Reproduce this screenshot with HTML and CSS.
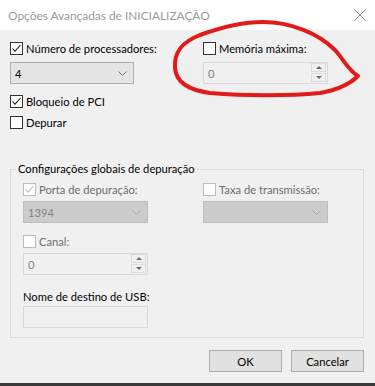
FILE: index.html
```html
<!DOCTYPE html>
<html lang="pt">
<head>
    <meta charset="UTF-8">
    <title>Opções Avançadas de INICIALIZAÇÃO</title>
    <link rel="stylesheet" href="styles.css">
</head>
<body>
    <div class="window">
        <div class="titlebar">
            <span class="title">Opções Avançadas de INICIALIZAÇÃO</span>
            <svg class="close" width="12" height="12" viewBox="0 0 12 12">
                <path d="M0.5 0.5 L11.5 11.5 M11.5 0.5 L0.5 11.5" stroke="#8a8a8a" stroke-width="1" fill="none"/>
            </svg>
        </div>

        <div class="dialog">
            <div class="cols">
                <div class="col">
                    <label class="check">
                        <span class="box"><svg viewBox="0 0 13 13"><path d="M2.5 6.5 L5 9.2 L10.5 3" stroke="#222" stroke-width="1.1" fill="none"/></svg></span>
                        Número de processadores:
                    </label>
                    <div class="combo">
                        <span>4</span>
                        <svg width="9" height="5" viewBox="0 0 9 5"><path d="M0.5 0.5 L4.5 4.5 L8.5 0.5" stroke="#707070" fill="none"/></svg>
                    </div>
                    <label class="check row-pci">
                        <span class="box"><svg viewBox="0 0 13 13"><path d="M2.5 6.5 L5 9.2 L10.5 3" stroke="#222" stroke-width="1.1" fill="none"/></svg></span>
                        Bloqueio de PCI
                    </label>
                    <label class="check row-dep">
                        <span class="box"></span>
                        Depurar
                    </label>
                </div>
                <div class="col">
                    <label class="check">
                        <span class="box"></span>
                        Memória máxima:
                    </label>
                    <div class="spin">
                        <span class="value">0</span>
                        <span class="spin-btns">
                            <span class="arrow up"></span>
                            <span class="arrow down"></span>
                        </span>
                    </div>
                </div>
            </div>

            <fieldset class="group">
                <legend>Configurações globais de depuração</legend>
                <div class="cols">
                    <div class="col">
                        <label class="check disabled">
                            <span class="box"><svg viewBox="0 0 13 13"><path d="M2.5 6.5 L5 9.2 L10.5 3" stroke="#bcbcbc" stroke-width="1.1" fill="none"/></svg></span>
                            Porta de depuração:
                        </label>
                        <div class="combo off">
                            <span>1394</span>
                            <svg width="9" height="5" viewBox="0 0 9 5"><path d="M0.5 0.5 L4.5 4.5 L8.5 0.5" stroke="#a6a6a6" fill="none"/></svg>
                        </div>
                    </div>
                    <div class="col">
                        <label class="check disabled">
                            <span class="box"></span>
                            Taxa de transmissão:
                        </label>
                        <div class="combo off">
                            <span></span>
                            <svg width="9" height="5" viewBox="0 0 9 5"><path d="M0.5 0.5 L4.5 4.5 L8.5 0.5" stroke="#a6a6a6" fill="none"/></svg>
                        </div>
                    </div>
                </div>

                <label class="check disabled row-canal">
                    <span class="box"></span>
                    Canal:
                </label>
                <div class="spin small">
                    <span class="value">0</span>
                    <span class="spin-btns">
                        <span class="arrow up"></span>
                        <span class="arrow down"></span>
                    </span>
                </div>

                <div class="field-label">Nome de destino de USB:</div>
                <div class="textbox"></div>
            </fieldset>

            <div class="buttons">
                <button class="btn">OK</button>
                <button class="btn">Cancelar</button>
            </div>
        </div>
        <div class="taskbar"></div>
    </div>

    <!-- red marker drawn over the screenshot -->
    <svg class="scribble" width="375" height="386" viewBox="0 0 375 386">
        <path d="M263 22 C290 22 318 33 335 50 C344 60 348 70 358 76 C352 82 342 89 320 93 C290 96 245 96 210 93 C188 90 176 82 175 68 C174 52 182 42 200 35 C222 27 245 22 263 22"
              stroke="#e31a1a" stroke-width="4" fill="none" stroke-linecap="round" stroke-linejoin="round"/>
    </svg>
</body>
</html>
```

FILE: styles.css
```css
body {
    margin: 0;
    width: 375px;
    height: 386px;
    overflow: hidden;
    font-family: Lato, 'Noto Sans', sans-serif;
    font-size: 11.2px;
    color: #000;
    background: #f0f0f0;
    position: relative;
}

.window {
    display: flex;
    flex-direction: column;
    height: 386px;
}

.titlebar {
    height: 30px;
    background: #fff;
    display: flex;
    align-items: center;
    justify-content: space-between;
    padding: 0 9px 0 8px;
    box-sizing: border-box;
}

.title {
    color: #999;
    font-size: 11.9px;
}

.close {
    margin-top: -1px;
}

.dialog {
    flex: 1;
    padding: 12px 11px 0 10px;
    box-sizing: border-box;
    display: flex;
    flex-direction: column;
}

.cols {
    display: grid;
    grid-template-columns: 193px 1fr;
}

.group .cols {
    grid-template-columns: 180px 1fr;
}

.col {
    display: flex;
    flex-direction: column;
    align-items: flex-start;
}

/* checkbox + label */
.check {
    display: flex;
    align-items: center;
    height: 13px;
    line-height: 13px;
    white-space: nowrap;
}

.box {
    width: 13px;
    height: 13px;
    box-sizing: border-box;
    border: 1px solid #333;
    background: #fff;
    margin-right: 3px;
    display: flex;
}

.box svg {
    width: 13px;
    height: 13px;
    margin: -1px;
}

.check.disabled {
    color: #6d6d6d;
}

.check.disabled .box {
    border-color: #bcbcbc;
}

.row-pci {
    margin-top: 11px;
}

.row-dep {
    margin-top: 8px;
}

/* combo boxes */
.combo {
    margin-top: 7px;
    width: 124px;
    height: 22px;
    box-sizing: border-box;
    border: 1px solid #acacac;
    background: #e5e5e5;
    display: flex;
    align-items: center;
    justify-content: space-between;
    padding: 0 6px 0 4px;
}

.combo.off {
    margin-top: 5px;
    width: 125px;
    background: #cccccc;
    border-color: #bfbfbf;
    color: #838383;
}

/* spinner */
.spin {
    margin-top: 7px;
    width: 125px;
    height: 22px;
    box-sizing: border-box;
    border: 1px solid #d9d9d9;
    background: #f0f0f0;
    display: flex;
    justify-content: space-between;
    align-items: center;
    padding-left: 4px;
    color: #838383;
}

.spin.small {
    margin-top: 5px;
}

.spin-btns {
    display: flex;
    flex-direction: column;
    gap: 1px;
    align-self: stretch;
    padding: 0 1px 1px 0;
}

.arrow {
    width: 15px;
    flex: 1;
    box-sizing: border-box;
    border: 1px solid #dcdcdc;
    display: flex;
    align-items: center;
    justify-content: center;
}

.arrow::before {
    content: "";
    border-left: 3px solid transparent;
    border-right: 3px solid transparent;
}

.arrow.up::before {
    border-bottom: 3px solid #6a6a6a;
}

.arrow.down::before {
    border-top: 3px solid #6a6a6a;
}

/* group box */
.group {
    margin: 33px 0 0 0;
    padding: 7px 12px 9px 12px;
    border: 1px solid #dcdcdc;
    min-width: 0;
}

.group legend {
    padding: 0 2px;
    margin-left: -7px;
    line-height: 14px;
}

.row-canal {
    margin-top: 12px;
}

.field-label {
    margin-top: 14px;
    line-height: 15px;
}

.textbox {
    margin-top: 2px;
    width: 125px;
    height: 22px;
    box-sizing: border-box;
    border: 1px solid #d9d9d9;
    background: #f0f0f0;
}

/* bottom buttons */
.buttons {
    margin-top: 12px;
    display: flex;
    justify-content: flex-end;
    gap: 9px;
}

.btn {
    width: 73px;
    height: 22px;
    border: 1px solid #adadad;
    background: #e1e1e1;
    font-family: inherit;
    font-size: 11.2px;
    color: #000;
    padding: 0;
}

.taskbar {
    height: 3px;
    background: #3a3a3a;
}

.scribble {
    position: absolute;
    top: 0;
    left: 0;
    pointer-events: none;
}
```
